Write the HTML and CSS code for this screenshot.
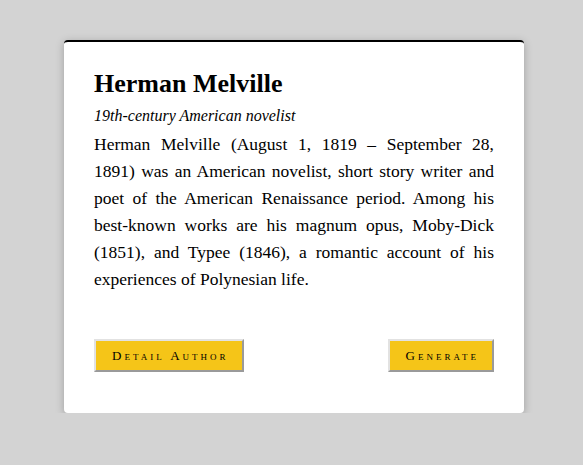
FILE: index.html
```html
<!DOCTYPE html>
<html>
<head>
<meta charset="utf-8">
<link rel="stylesheet" href="styles.css">
</head>
<body>
<div class="page">
  <div class="card">
    <h1 class="title">Herman Melville</h1>
    <p class="subtitle">19th-century American novelist</p>
    <p class="bio">Herman Melville (August 1, 1819 – September 28, 1891) was an American novelist, short story writer and poet of the American Renaissance period. Among his best-known works are his magnum opus, Moby-Dick (1851), and Typee (1846), a romantic account of his experiences of Polynesian life.</p>
    <div class="actions">
      <button class="btn">Detail Author</button>
      <button class="btn">Generate</button>
    </div>
  </div>
</div>
</body>
</html>
```
FILE: styles.css
```css
html, body {
  margin: 0;
  padding: 0;
  background: #d3d3d3;
  font-family: "Liberation Serif", "Times New Roman", serif;
  color: #000;
}
.page {
  padding: 40px 0 0 64px;
}
.card {
  box-sizing: border-box;
  width: 460px;
  background: #fff;
  border-top: 2px solid #000;
  border-radius: 4px;
  box-shadow: 0 2px 8px rgba(0,0,0,0.25);
  padding: 27px 30px 41px 30px;
}
.title {
  margin: 0;
  font-size: 26px;
  font-weight: bold;
  line-height: 30px;
}
.subtitle {
  margin: 7px 0 0 0;
  font-style: italic;
  font-size: 16px;
  line-height: 20px;
}
.bio {
  margin: 5px 0 0 0;
  font-size: 17.5px;
  line-height: 27px;
  text-align: justify;
}
.actions {
  display: flex;
  justify-content: space-between;
  margin-top: 46px;
}
.btn {
  background: #f5c518;
  font-family: "Liberation Serif", "Times New Roman", serif;
  font-variant: small-caps;
  font-size: 13px;
  letter-spacing: 3px;
  color: #000;
  padding: 0 13px 0 16px;
  height: 33px;
  border-style: solid;
  border-width: 2px;
  border-color: #e2e2e2 #9a9a9a #9a9a9a #e2e2e2;
  border-radius: 0;
}
```
